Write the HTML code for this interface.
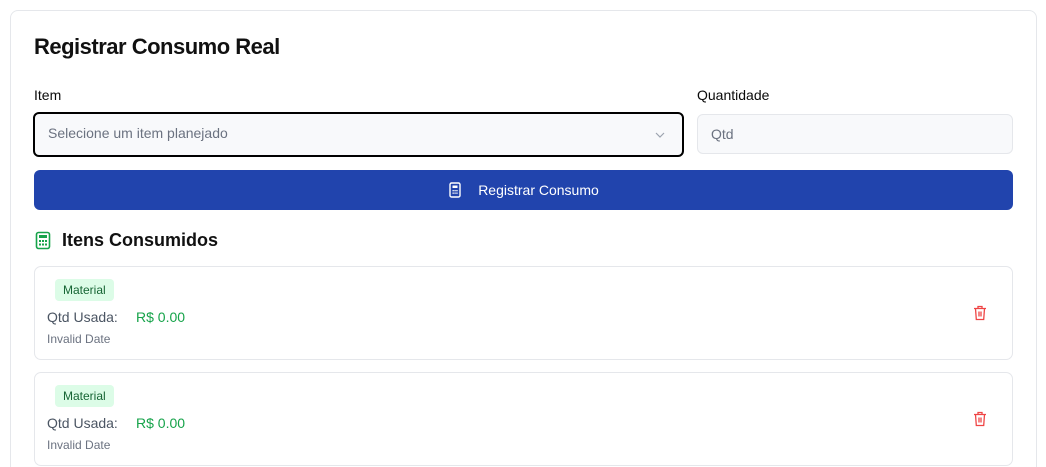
<!DOCTYPE html>
<html><head><meta charset="utf-8"><style>
*{box-sizing:border-box;margin:0;padding:0}
html,body{width:1046px;height:467px;overflow:hidden}
body{background:#fff;font-family:"Liberation Sans",sans-serif;position:relative;color:#111}
.abs{position:absolute}
.card{left:10px;top:10px;width:1027px;height:480px;border:1px solid #e5e7eb;border-radius:8px;background:#fff}
.h1{left:34px;top:34px;font-size:22px;font-weight:bold;letter-spacing:-0.5px}
.lbl{font-size:14px;color:#0a0a0a}
.sel{left:33px;top:112px;width:651px;height:45px;border:2px solid #000;border-radius:6px;background:#f8f9fb;font-size:14px;color:#6b7280;padding:11px 13px}
.inp{left:697px;top:114px;width:316px;height:40px;border:1px solid #e5e7eb;border-radius:6px;background:#f8f9fb;font-size:14px;color:#6b7280;padding:11px 13px}
.btn{left:34px;top:170px;width:979px;height:40px;background:#2144ad;border-radius:6px;color:#fff;font-size:14px;display:flex;align-items:center;justify-content:center;gap:16px}
.item{left:34px;width:979px;height:94px;border:1px solid #e5e7eb;border-radius:7px}
.tag{position:absolute;left:20px;top:12px;background:#dcfce7;color:#166534;font-size:12px;padding:4px 8px;border-radius:4px}
.q{position:absolute;left:12px;top:42px;font-size:14px;color:#4b5563}
.v{position:absolute;left:101px;top:42px;font-size:14px;color:#16a34a}
.d{position:absolute;left:12px;top:65px;font-size:12px;color:#6b7280}
.tr{position:absolute;left:938px;top:38px}
</style></head><body>
<div class="abs card"></div>
<div class="abs h1">Registrar Consumo Real</div>
<div class="abs lbl" style="left:34px;top:87px">Item</div>
<div class="abs lbl" style="left:697px;top:87px">Quantidade</div>
<div class="abs sel">Selecione um item planejado
<svg style="position:absolute;right:16px;top:16px" width="12" height="10" viewBox="0 0 12 10"><path d="M2 3l4 4 4-4" fill="none" stroke="#9ca3af" stroke-width="1.2"/></svg></div>
<div class="abs inp">Qtd</div>
<div class="abs btn"><svg width="14" height="16" viewBox="0 0 14 16"><rect x="2" y="1" width="10" height="14" rx="1.5" fill="none" stroke="#fff" stroke-width="1.4"/><rect x="4.5" y="3.5" width="5" height="2.5" fill="#fff"/><g fill="#fff"><rect x="4.5" y="8" width="1.3" height="1.3"/><rect x="6.4" y="8" width="1.3" height="1.3"/><rect x="8.3" y="8" width="1.3" height="1.3"/><rect x="4.5" y="10.5" width="1.3" height="1.3"/><rect x="6.4" y="10.5" width="1.3" height="1.3"/><rect x="8.3" y="10.5" width="1.3" height="1.3"/></g></svg><span>Registrar Consumo</span></div>
<svg class="abs" style="left:35px;top:231px" width="16" height="19" viewBox="0 0 16 19"><rect x="1.5" y="1.5" width="13" height="16" rx="2" fill="none" stroke="#16a34a" stroke-width="1.6"/><rect x="4" y="4" width="8" height="3" fill="#16a34a"/><g fill="#16a34a"><rect x="4" y="9" width="2" height="2"/><rect x="7" y="9" width="2" height="2"/><rect x="10" y="9" width="2" height="2"/><rect x="4" y="12.5" width="2" height="2"/><rect x="7" y="12.5" width="2" height="2"/><rect x="10" y="12.5" width="2" height="2"/></g></svg>
<div class="abs" style="left:62px;top:230px;font-size:18px;font-weight:bold">Itens Consumidos</div>

<div class="abs item" style="top:266px"><span class="tag">Material</span><span class="q">Qtd Usada:</span><span class="v">R$ 0.00</span><span class="d">Invalid Date</span>
<svg class="tr" width="14" height="16" viewBox="0 0 14 16"><path d="M1 3.5h12M5 3.5V1.5h4v2M2.5 3.5l.8 11h7.4l.8-11M6 6.5v5M8 6.5v5" fill="none" stroke="#ef4444" stroke-width="1.3"/></svg></div>
<div class="abs item" style="top:372px"><span class="tag">Material</span><span class="q">Qtd Usada:</span><span class="v">R$ 0.00</span><span class="d">Invalid Date</span>
<svg class="tr" width="14" height="16" viewBox="0 0 14 16"><path d="M1 3.5h12M5 3.5V1.5h4v2M2.5 3.5l.8 11h7.4l.8-11M6 6.5v5M8 6.5v5" fill="none" stroke="#ef4444" stroke-width="1.3"/></svg></div>
</body></html>
